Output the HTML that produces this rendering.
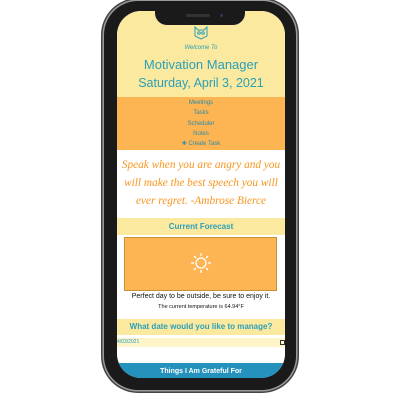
<!DOCTYPE html><html><head><style>
body{margin:0;width:400px;height:400px;background:#fff;position:relative;overflow:hidden;font-family:"Liberation Sans",sans-serif}
.phone{position:absolute;left:104px;top:1px;width:192px;height:389px;border-radius:34px;background:#1a1a1a;box-shadow:0 0 0 1.5px #999,0 0 0 3px #444}
.screen{position:absolute;left:117px;top:11px;width:168px;height:367px;border-radius:24px;overflow:hidden;background:#fff}
.notch{position:absolute;left:155px;top:10px;width:90px;height:15px;background:#1a1a1a;border-radius:0 0 12px 12px}
.abs{position:absolute;left:0;width:168px;text-align:center}
.teal{color:#2a9fb8}
</style></head><body>
<div class="phone"></div>
<div class="screen">
<div class="abs" style="top:0;height:86px;background:#fbe9a0"></div>
<svg style="position:absolute;left:77px;top:15px" width="14" height="14" viewBox="0 0 14 14" fill="none" stroke="#2a9fb8" stroke-width="1"><path d="M1 1L4 4H10L13 1V10L7 13L1 10Z"/><circle cx="5" cy="7" r="1.3"/><circle cx="9" cy="7" r="1.3"/></svg>
<div class="abs teal" style="top:34px;font-size:6px;font-style:italic">Welcome To</div>
<div class="abs teal" style="top:46px;font-size:13px">Motivation Manager</div>
<div class="abs teal" style="top:65px;font-size:12.5px">Saturday, April 3, 2021</div>
<div class="abs" style="top:86px;height:52px;background:#fdb553;font-size:6px;color:#2a8aa8;line-height:10.3px;padding-top:1px">Meetings<br>Tasks<br>Scheduler<br>Notes<br>✚ Create Task</div>
<div class="abs" style="top:145px;font-family:'Liberation Serif',serif;font-style:italic;color:#f7941d;font-size:11.3px;line-height:18px">Speak when you are angry and you will make the best speech you will ever regret. -Ambrose Bierce</div>
<div class="abs teal" style="top:207px;height:17px;background:#fbe9a0;font-size:8px;line-height:17px;font-weight:bold">Current Forecast</div>
<div style="position:absolute;left:7px;top:226px;width:151px;height:52px;background:#fdb553;border:1px solid #c9903a"></div>
<svg style="position:absolute;left:72px;top:240px" width="24" height="24" viewBox="0 0 24 24" fill="none" stroke="#fff" stroke-width="1.3"><circle cx="12" cy="12" r="5"/><path d="M12 2v3M12 19v3M2 12h3M19 12h3M5 5l2 2M17 17l2 2M5 19l2-2M17 7l2-2"/></svg>
<div class="abs" style="top:282px;font-size:7px;color:#111">Perfect day to be outside, be sure to enjoy it.</div>
<div class="abs" style="top:293px;font-size:5.5px;color:#111">The current temperature is 64.94°F</div>
<div class="abs teal" style="top:308px;height:16px;background:#fbe9a0;font-size:8px;line-height:16px;font-weight:bold">What date would you like to manage?</div>
<div class="abs" style="top:327px;height:9px;background:#fdf4c8;text-align:left;font-size:5px;line-height:9px;color:#2a9fb8">4/03/2021</div>
<div style="position:absolute;left:163px;top:329px;width:5px;height:5px;border:1px solid #333;box-sizing:border-box"></div>
<div class="abs" style="top:352px;height:20px;background:#2591bd;color:#fff;font-size:7px;font-weight:bold;line-height:17px">Things I Am Grateful For</div>
</div>
<div class="notch"></div>
<div style="position:absolute;left:186px;top:14px;width:24px;height:3px;border-radius:2px;background:#333"></div>
<div style="position:absolute;left:220px;top:14px;width:3px;height:3px;border-radius:50%;background:#2a3a5a"></div>
</body></html>
